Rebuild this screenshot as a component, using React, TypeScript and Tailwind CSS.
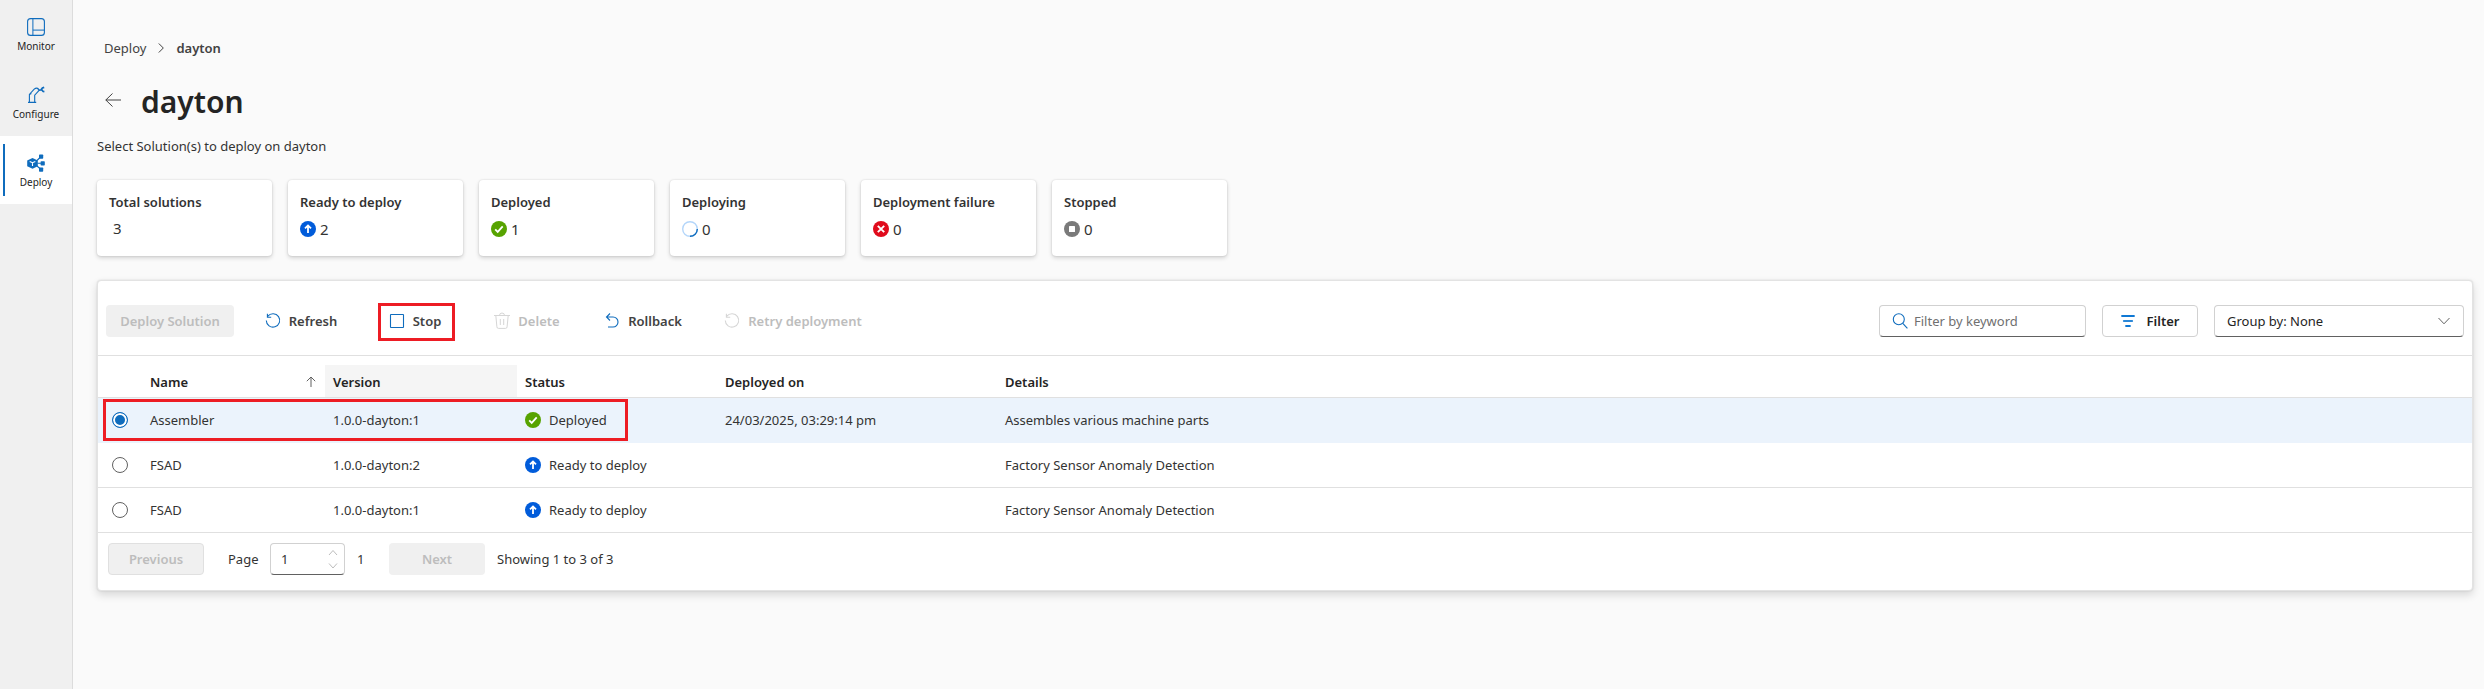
import React from "react";

type Status = "ready" | "deployed" | "deploying" | "failed" | "stopped";

function StatusIcon({ status }: { status: Status }) {
  return (
    <svg viewBox="0 0 16 16" className="size-4 shrink-0" aria-hidden="true" fill="none">
      {status === "ready" && (
        <>
          <circle cx="8" cy="8" r="8" fill="#015cda" />
          <path d="M8 12V4.6M5 7.4 8 4.4l3 3" stroke="#fff" strokeWidth="1.8" />
        </>
      )}
      {status === "deployed" && (
        <>
          <circle cx="8" cy="8" r="8" fill="#57a300" />
          <path d="m4.2 8.4 2.5 2.5 5-5.6" stroke="#fff" strokeWidth="1.8" />
        </>
      )}
      {status === "deploying" && (
        <>
          <circle cx="8" cy="8" r="7.3" stroke="#b4d6fa" strokeWidth="1.4" />
          <path d="M15.3 8A7.3 7.3 0 0 1 8 15.3" stroke="#0f6cbd" strokeWidth="1.4" />
        </>
      )}
      {status === "failed" && (
        <>
          <circle cx="8" cy="8" r="8" fill="#e00b1c" />
          <path d="m4.8 4.8 6.4 6.4M11.2 4.8l-6.4 6.4" stroke="#fff" strokeWidth="1.9" />
        </>
      )}
      {status === "stopped" && (
        <>
          <circle cx="8" cy="8" r="8" fill="#7a7a7a" />
          <rect x="5" y="5" width="6" height="6" rx="0.6" fill="#fff" />
        </>
      )}
    </svg>
  );
}

function MonitorIcon() {
  return (
    <svg viewBox="0 0 18 18" className="size-[18px]" fill="none" stroke="#0f6cbd" aria-hidden="true">
      <rect x="0.6" y="0.6" width="16.8" height="16.8" rx="3" strokeWidth="1.1" />
      <path d="M5.9.6v16.8M5.9 12.1h11.5" />
    </svg>
  );
}

function ConfigureIcon() {
  return (
    <svg viewBox="0 0 18 18" className="size-[18px]" fill="none" stroke="#0f6cbd" strokeWidth="1.1" aria-hidden="true">
      <path d="M1 16.400h8.200M2.400 16.400V8.400L7.200 3.200c1.400-1.200 3-1.300 4.400-.4M7.700 16.400V9.200l4.200-4.600M2.400 8.600l2-1" />
      <path d="M11 3.200c1.200 1.400 2.200 1.200 3.200.4l1.200-1.600 1.800-.6M12 4.200l2.400-.6c.8.200 1 1.400 1.800 1.800l1.200.2" strokeWidth="1.700" />
    </svg>
  );
}

function DeployIcon() {
  return (
    <svg viewBox="0 0 18 18" className="size-[18px]" fill="#0f6cbd" aria-hidden="true">
      <path d="M5.500 4 10.800 6.500v5.700L5.500 14.800.2 12.200V6.500z" />
      <path d="M2.700 7.400 5.500 8.700l2.800-1.300M5.500 8.700v3.200" stroke="#fff" strokeWidth="1.100" fill="none" />
      <path d="M10 6.500 13.500 3M10.500 9.300H14M10 12l3.500 3" stroke="#0f6cbd" strokeWidth="1.100" />
      <rect x="12" y="0.500" width="4.200" height="4.200" rx="0.700" />
      <rect x="13.600" y="7.200" width="4.200" height="4.200" rx="0.700" />
      <rect x="12" y="13.500" width="4.200" height="4.200" rx="0.700" />
    </svg>
  );
}

function RefreshIcon() {
  return (
    <svg viewBox="0 0 20 20" className="size-5 shrink-0" fill="none" stroke="currentColor" strokeWidth="1.100" aria-hidden="true">
      <path d="M4.800 5.200A6.700 6.700 0 1 1 3.300 9.500M4.400 2.800v3.400h3.800" />
    </svg>
  );
}

function StopIcon() {
  return (
    <svg viewBox="0 0 20 20" className="size-5 shrink-0" fill="none" stroke="currentColor" aria-hidden="true">
      <rect x="3.500" y="3.500" width="13" height="13" rx="0.500" strokeWidth="1.100" />
    </svg>
  );
}

function TrashIcon() {
  return (
    <svg viewBox="0 0 20 20" className="size-5 shrink-0" fill="none" stroke="currentColor" aria-hidden="true">
      <path d="M2 4.500h16M7.500 4.500a2.500 2.500 0 0 1 5 0M3.800 4.500l1.100 11.300a1.600 1.600 0 0 0 1.600 1.600h7a1.600 1.600 0 0 0 1.600-1.600l1.100-11.300M8.300 8v6M11.700 8v6" />
    </svg>
  );
}

function RollbackIcon() {
  return (
    <svg viewBox="0 0 20 20" className="size-5 shrink-0" fill="none" stroke="currentColor" strokeWidth="1.100" aria-hidden="true">
      <path d="M8 2.500 4.500 6 8 9.500M4.500 6H11a5 5 0 0 1 0 10H6" />
    </svg>
  );
}

const navItems = [
  { label: "Monitor", icon: <MonitorIcon />, active: false },
  { label: "Configure", icon: <ConfigureIcon />, active: false },
  { label: "Deploy", icon: <DeployIcon />, active: true },
];

const summary: { label: string; value: number; status?: Status }[] = [
  { label: "Total solutions", value: 3 },
  { label: "Ready to deploy", value: 2, status: "ready" },
  { label: "Deployed", value: 1, status: "deployed" },
  { label: "Deploying", value: 0, status: "deploying" },
  { label: "Deployment failure", value: 0, status: "failed" },
  { label: "Stopped", value: 0, status: "stopped" },
];

const rows: { name: string; version: string; status: Status; statusText: string; on: string; details: string }[] = [
  { name: "Assembler", version: "1.0.0-dayton:1", status: "deployed", statusText: "Deployed", on: "24/03/2025, 03:29:14 pm", details: "Assembles various machine parts" },
  { name: "FSAD", version: "1.0.0-dayton:2", status: "ready", statusText: "Ready to deploy", on: "", details: "Factory Sensor Anomaly Detection" },
  { name: "FSAD", version: "1.0.0-dayton:1", status: "ready", statusText: "Ready to deploy", on: "", details: "Factory Sensor Anomaly Detection" },
];

function ToolButton({ icon, label, width, disabled, children }: { icon: React.ReactNode; label: string; width: string; disabled?: boolean; children?: React.ReactNode }) {
  return (
    <button type="button" disabled={disabled} className={`relative flex h-8 shrink-0 items-center justify-center gap-1.5 whitespace-nowrap font-semibold ${width} ${disabled ? "text-[#bdbdbd]" : "text-[#424242]"}`}>
      <span className={disabled ? "text-[#d6d6d6]" : "text-[#0f6cbd]"}>{icon}</span>
      {label}
      {children}
    </button>
  );
}

export default function App() {
  const [selected, setSelected] = React.useState(0);
  return (
    <div className="flex min-h-screen bg-[#fafafa] font-['Noto_Sans',sans-serif] text-[13px] leading-5 text-[#333333]">
      <nav className="w-[73px] shrink-0 border-r border-[#dcdcdc] bg-[#f0f0f0]">
        {navItems.map((item) => (
          <a key={item.label} href={`#${item.label}`} className={`relative flex h-[68px] flex-col items-center pt-[18px] text-[10px] leading-[14px] text-[#242424] ${item.active ? "bg-white" : ""}`}>
            {item.active && <span className="absolute top-2 bottom-2 left-[3px] w-0.5 bg-[#0f6cbd]" />}
            {item.icon}
            <span className="mt-[3px]">{item.label}</span>
          </a>
        ))}
      </nav>

      <main className="min-w-0 flex-1 pr-[11px] pl-6">
        <nav aria-label="Breadcrumb" className="flex items-center gap-3 pt-[38px] pl-[7px] text-[#424242]">
          <a href="#Deploy">Deploy</a>
          <svg viewBox="0 0 6 10" className="h-2.5 w-1.5" fill="none" stroke="#424242" aria-hidden="true">
            <path d="m.8.500 4.500 4.500-4.500 4.500" />
          </svg>
          <span className="font-semibold">dayton</span>
        </nav>

        <div className="flex items-center gap-5 pt-6 pl-2">
          <button type="button" aria-label="Back" className="pb-1">
            <svg viewBox="0 0 16 14" className="h-3.5 w-4" fill="none" stroke="#424242" aria-hidden="true">
              <path d="M7.500.500.800 7l6.700 6.500M.800 7H16" />
            </svg>
          </button>
          <h1 className="text-[30px] leading-10 font-semibold text-[#242424]">dayton</h1>
        </div>

        <p className="pt-3.5">Select Solution(s) to deploy on dayton</p>

        <div className="flex gap-4 pt-6">
          {summary.map((card) => (
            <section key={card.label} className="h-[76px] w-[175px] rounded bg-white px-3 pt-3 shadow-[0_0_2px_rgba(0,0,0,0.14),0_2px_4px_rgba(0,0,0,0.16)]">
              <h2 className="font-semibold">{card.label}</h2>
              <div className={`flex items-center text-[15px] leading-5 ${card.status ? "pt-[7px]" : "pt-1.5"}`}>
                {card.status ? <StatusIcon status={card.status} /> : null}
                <span className="pl-1">{card.value}</span>
              </div>
            </section>
          ))}
        </div>

        <section className="mt-6 rounded border border-[#e3e3e3] bg-white shadow-[0_0_2px_rgba(0,0,0,0.12),0_4px_8px_rgba(0,0,0,0.14)]">
          <div className="flex items-center border-b border-[#e0e0e0] px-2 pt-6 pb-[18px]">
            <div className="flex items-center gap-4">
              <button type="button" disabled className="h-8 w-32 rounded bg-[#f0f0f0] font-semibold text-[#bdbdbd]">Deploy Solution</button>
              <ToolButton icon={<RefreshIcon />} label="Refresh" width="w-[100px]" />
              <ToolButton icon={<StopIcon />} label="Stop" width="w-24">
                <span className="absolute -top-0.5 right-[7px] -bottom-1 left-3 border-[3px] border-[#ed1c24]" />
              </ToolButton>
              <ToolButton icon={<TrashIcon />} label="Delete" width="w-24" disabled />
              <ToolButton icon={<RollbackIcon />} label="Rollback" width="w-[104px]" />
              <ToolButton icon={<RefreshIcon />} label="Retry deployment" width="w-[164px]" disabled />
            </div>
            <div className="ml-auto flex items-center gap-4">
              <label className="flex h-8 w-[207px] items-center gap-1.5 rounded border border-[#d1d1d1] border-b-[#616161] px-3">
                <svg viewBox="0 0 16 16" className="size-4 shrink-0" fill="none" stroke="#0f6cbd" strokeWidth="1.100" aria-hidden="true">
                  <circle cx="6.800" cy="6.300" r="5.500" />
                  <path d="m10.800 10.300 4.600 5" />
                </svg>
                <input type="text" aria-label="Filter by keyword" placeholder="Filter by keyword" className="w-full min-w-0 bg-transparent outline-none placeholder:text-[#707070]" />
              </label>
              <button type="button" className="flex h-8 w-24 items-center justify-center gap-3 rounded border border-[#d1d1d1] font-semibold text-[#242424]">
                <svg viewBox="0 0 14 12" className="h-3 w-3.5" fill="none" strokeWidth="1.800" strokeLinecap="round" aria-hidden="true">
                  <path d="M1 1h12" stroke="#0f78d4" />
                  <path d="M2.800 6h8.400" stroke="#2b88d8" />
                  <path d="M5 11h4" stroke="#0f78d4" />
                </svg>
                Filter
              </button>
              <div className="relative w-[250px]">
                <select aria-label="Group by" className="h-8 w-full appearance-none rounded border border-[#d1d1d1] border-b-[#616161] bg-white px-3 text-[#242424]">
                  <option>Group by: None</option>
                  <option>Group by: Status</option>
                </select>
                <svg viewBox="0 0 12 8" className="pointer-events-none absolute top-3 right-3.5 h-2 w-3" fill="none" stroke="#616161" aria-hidden="true">
                  <path d="m.500 1 5.500 5.800L11.500 1" />
                </svg>
              </div>
            </div>
          </div>

          <div className="relative pt-[9px]">
            <table className="w-full table-fixed border-separate border-spacing-0 text-left">
              <colgroup>
                <col className="w-11" />
                <col className="w-[183px]" />
                <col className="w-48" />
                <col className="w-[200px]" />
                <col className="w-[280px]" />
                <col />
              </colgroup>
              <thead>
                <tr className="h-[33px] text-[#242424] *:border-b *:border-[#e0e0e0] *:pt-0.5">
                  <th aria-label="Selection" />
                  <th className="px-2 font-semibold">
                    <span className="flex items-center justify-between">
                      Name
                      <svg viewBox="0 0 12 12" className="size-3" fill="none" stroke="#616161" aria-hidden="true">
                        <path d="M6 11V1M1.800 5.200 6 1l4.200 4.200" />
                      </svg>
                    </span>
                  </th>
                  <th className="bg-[#f5f5f5] px-2 font-semibold">Version</th>
                  <th className="px-2 font-semibold">Status</th>
                  <th className="px-2 font-semibold">Deployed on</th>
                  <th className="px-2 font-semibold">Details</th>
                </tr>
              </thead>
              <tbody>
                {rows.map((row, i) => (
                  <tr key={i} className={`h-[45px] *:border-b ${selected === i ? "bg-[#ebf3fc] *:border-[#ebf3fc]" : "*:border-[#e0e0e0]"}`}>
                    <td className="pl-3.5">
                      <input
                        type="radio"
                        name="solution"
                        aria-label={`${row.name} ${row.version}`}
                        checked={selected === i}
                        onChange={() => setSelected(i)}
                        className="block size-4 appearance-none rounded-full border border-[#616161] bg-white checked:border-[#0f6cbd] checked:bg-[#0f6cbd] checked:shadow-[inset_0_0_0_2px_white]"
                      />
                    </td>
                    <td className="px-2">{row.name}</td>
                    <td className="px-2">{row.version}</td>
                    <td className="px-2">
                      <span className="flex items-center gap-2">
                        <StatusIcon status={row.status} />
                        {row.statusText}
                      </span>
                    </td>
                    <td className="px-2">{row.on}</td>
                    <td className="px-2">{row.details}</td>
                  </tr>
                ))}
              </tbody>
            </table>
            <div className="pointer-events-none absolute top-[43px] left-[5px] h-[42px] w-[525px] border-[3px] border-[#ed1c24]" />
          </div>

          <div className="flex items-center px-2.5 pt-2.5 pb-[15px]">
            <button type="button" disabled className="h-8 w-24 rounded border border-[#e0e0e0] bg-[#f0f0f0] font-semibold text-[#bdbdbd]">Previous</button>
            <label htmlFor="page" className="ml-6 w-[42px]">Page</label>
            <div className="relative w-[75px]">
              <input id="page" type="number" defaultValue={1} className="h-8 w-full rounded border border-[#d1d1d1] border-b-[#616161] bg-white pl-2.5 [appearance:textfield] [&::-webkit-inner-spin-button]:appearance-none" />
              <svg viewBox="0 0 10 20" className="pointer-events-none absolute top-1.5 right-[7px] h-5 w-2.5" fill="none" stroke="#bdbdbd" aria-hidden="true">
                <path d="m1 6 4-4.500L9 6M1 14.500 5 19l4-4.500" />
              </svg>
            </div>
            <span className="ml-3 w-8">1</span>
            <button type="button" disabled className="h-8 w-24 rounded bg-[#f0f0f0] font-semibold text-[#bdbdbd]">Next</button>
            <span className="ml-3">Showing 1 to 3 of 3</span>
          </div>
        </section>
      </main>
    </div>
  );
}
